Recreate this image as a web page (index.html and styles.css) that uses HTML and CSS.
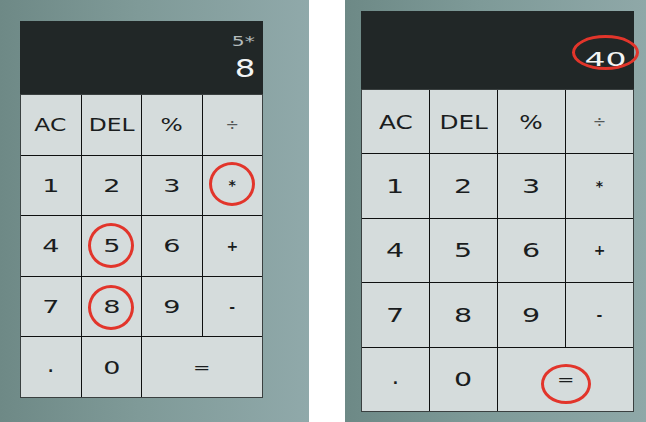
FILE: index.html
```html
<!DOCTYPE html>
<html lang="en">
<head>
<meta charset="utf-8">
<title>Calculator</title>
<link rel="stylesheet" href="styles.css">
</head>
<body>
<div class="page">
  <section class="panel panel-left">
    <div class="calc calc-a">
      <div class="display">
        <div class="prev"><span class="wide-glyph">5*</span></div>
        <div class="cur"><span class="wide-glyph">8</span></div>
      </div>
      <div class="keys">
        <div class="key"><span class="wide-glyph">AC</span></div>
        <div class="key"><span class="wide-glyph">DEL</span></div>
        <div class="key"><span class="wide-glyph">%</span></div>
        <div class="key op light"><span>÷</span></div>
        <div class="key num"><span class="wide-glyph">1</span></div>
        <div class="key num"><span class="wide-glyph">2</span></div>
        <div class="key num"><span class="wide-glyph">3</span></div>
        <div class="key op"><span>*</span></div>
        <div class="key num"><span class="wide-glyph">4</span></div>
        <div class="key num"><span class="wide-glyph">5</span></div>
        <div class="key num"><span class="wide-glyph">6</span></div>
        <div class="key op"><span>+</span></div>
        <div class="key num"><span class="wide-glyph">7</span></div>
        <div class="key num"><span class="wide-glyph">8</span></div>
        <div class="key num"><span class="wide-glyph">9</span></div>
        <div class="key op"><span>-</span></div>
        <div class="key op"><span>.</span></div>
        <div class="key num"><span class="wide-glyph">0</span></div>
        <div class="key eq wide"><span class="wide-glyph">=</span></div>
      </div>
    </div>
  </section>
  <div class="spacer"></div>
  <section class="panel panel-right">
    <div class="calc calc-b">
      <div class="display">
        <div class="cur"><span class="wide-glyph">40</span></div>
      </div>
      <div class="keys">
        <div class="key"><span class="wide-glyph">AC</span></div>
        <div class="key"><span class="wide-glyph">DEL</span></div>
        <div class="key"><span class="wide-glyph">%</span></div>
        <div class="key op light"><span>÷</span></div>
        <div class="key num"><span class="wide-glyph">1</span></div>
        <div class="key num"><span class="wide-glyph">2</span></div>
        <div class="key num"><span class="wide-glyph">3</span></div>
        <div class="key op"><span>*</span></div>
        <div class="key num"><span class="wide-glyph">4</span></div>
        <div class="key num"><span class="wide-glyph">5</span></div>
        <div class="key num"><span class="wide-glyph">6</span></div>
        <div class="key op"><span>+</span></div>
        <div class="key num"><span class="wide-glyph">7</span></div>
        <div class="key num"><span class="wide-glyph">8</span></div>
        <div class="key num"><span class="wide-glyph">9</span></div>
        <div class="key op"><span>-</span></div>
        <div class="key op"><span>.</span></div>
        <div class="key num"><span class="wide-glyph">0</span></div>
        <div class="key eq wide"><span class="wide-glyph">=</span></div>
      </div>
    </div>
  </section>
  <span class="mark mark-mul"></span>
  <span class="mark mark-5"></span>
  <span class="mark mark-8"></span>
  <span class="mark mark-40"></span>
  <span class="mark mark-eq"></span>
</div>
</body>
</html>
```

FILE: styles.css
```css
* { box-sizing: border-box; }
html, body { margin: 0; padding: 0; background: #ffffff; }
body { width: 646px; height: 422px; overflow: hidden; font-family: "DejaVu Sans", "Liberation Sans", sans-serif; }

.page { position: relative; display: flex; width: 646px; height: 422px; }

.panel { height: 422px; }
.panel-left {
  width: 309px;
  padding: 21px 0 0 20px;
  background: linear-gradient(90deg, #6e8986 0%, #7f9a98 45%, #90a9aa 100%);
}
.spacer { width: 36px; background: #ffffff; }
.panel-right {
  width: 301px;
  padding: 11px 0 0 16px;
  background: linear-gradient(90deg, #6d8986 0%, #7e9a98 45%, #8fa8a8 100%);
}

.calc { display: flex; flex-direction: column; }
.calc-a { width: 243px; }
.calc-b { width: 273px; }

.wide-glyph { display: inline-block; transform: scaleX(1.3); }

.display {
  background: #212727;
  display: flex;
  flex-direction: column;
  align-items: flex-end;
  justify-content: flex-end;
  color: #f2f4f4;
}
.calc-a .display { height: 73px; padding: 0 8px 14px 0; }
.calc-b .display { height: 78px; padding: 0 8px 21px 0; }

.prev { color: #b4bcbc; font-size: 14px; line-height: 18px; }
.prev .wide-glyph { transform-origin: right center; transform: scaleX(1.45); }
.calc-a .prev { margin-bottom: 8px; }
.cur { font-size: 24px; line-height: 22px; }
.cur .wide-glyph { transform-origin: right center; transform: scaleX(1.35); }
.calc-b .cur { font-size: 20px; line-height: 18px; }
.calc-b .cur .wide-glyph { transform: scaleX(1.65); }

.keys {
  display: grid;
  grid-template-columns: repeat(4, 1fr);
  gap: 1px;
  background: #0e1010;
  border: 1px solid #3a4040;
}
.calc-a .keys { height: 304px; grid-template-rows: repeat(5, 1fr); }
.calc-b .keys { height: 323px; grid-template-rows: repeat(5, 1fr); }

.key {
  background: #d5dcdc;
  color: #1a1d1e;
  display: flex;
  align-items: center;
  justify-content: center;
  font-size: 18px;
}
.key.num .wide-glyph { transform: scaleX(1.5); }
.calc-b .key { font-size: 19px; }
.key.op { font-size: 14px; font-weight: bold; }
.key.light { font-weight: normal; color: #55595a; font-size: 16px; }
.key.eq { font-size: 16px; }
.key.wide { grid-column: span 2; }

.mark {
  position: absolute;
  border: 3px solid #e2352b;
  border-radius: 50%;
}
.mark-mul { left: 209px; top: 162px; width: 46px; height: 44px; }
.mark-5 { left: 88px; top: 223px; width: 46px; height: 45px; }
.mark-8 { left: 88px; top: 285px; width: 46px; height: 45px; }
.mark-40 { left: 572px; top: 35px; width: 67px; height: 35px; }
.mark-eq { left: 541px; top: 364px; width: 50px; height: 40px; }
```
